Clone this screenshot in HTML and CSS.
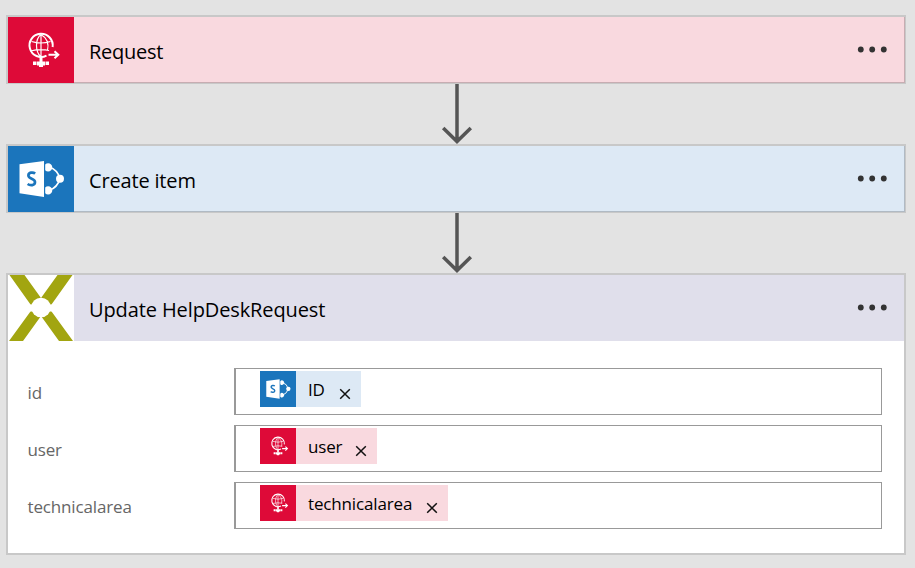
FILE: index.html
```html
<!DOCTYPE html>
<html lang="en">
<head>
<meta charset="utf-8">
<title>Workflow designer</title>
<link rel="stylesheet" href="styles.css">
</head>
<body>
<svg class="defs" width="0" height="0" aria-hidden="true">
  <symbol id="globe" viewBox="0 0 66 66">
    <g fill="none" stroke="#fff" stroke-width="2">
      <path d="M38.5 38.600A11.600 11.600 0 1 1 44.600 30"/>
      <path stroke-width="1.200" d="M23.500 24.500Q33 27.500 42.500 24.500M22.500 34Q33 31.500 41 33.500M33 17.500C27 22 27 35 33 40M33 17.500C39 21 41 27 39.500 33.500M33 17.500V40"/>
      <path d="M40.500 37.800H50M46.500 34.300L50.300 37.800L46.500 41.300"/>
      <path stroke-width="3" d="M33 40V45"/>
    </g>
    <path fill="#fff" d="M25 44.500H28.500V48H25zM29 44.500H37V48.500H35V50H31V48.500H29zM37.500 44.500H41V48H37.500z"/>
  </symbol>
  <symbol id="sharepoint" viewBox="0 0 66 66">
    <path fill="#fff" d="M11.500 18.300L36 15V51L11.500 47.200z"/>
    <path fill="none" stroke="#1b75bc" stroke-width="2.700" d="M27.200 27.500C25 26 20.400 26.200 20.400 29.500C20.400 33.200 27 32.200 27 36C27 39.700 22.200 39.800 19.600 38"/>
    <path fill="none" stroke="#fff" stroke-width="1.700" d="M41 21Q49.500 23.500 52 32.700Q49.500 41.500 41 44.500"/>
    <path fill="#fff" d="M37.200 18.600A4.100 4.100 0 1 1 37.200 24.200zM37.200 41.600A4.100 4.100 0 1 1 37.200 47.200z"/>
    <circle cx="52" cy="32.700" r="4" fill="#fff"/>
  </symbol>
  <symbol id="cross" viewBox="0 0 66 66">
    <path fill="#fff" d="M0 0H66V66H0z"/>
    <path fill="#a2a510" d="M1.500 0H16.500L33 23L49.500 0H64.500L41 33L65 66H51L33 41L15 66H1L25 33z"/>
    <circle cx="33" cy="32.500" r="9.800" fill="#fff"/>
    <path fill="#fff" d="M22 29.500H44V36.500H22z"/>
  </symbol>
  <symbol id="dots" viewBox="0 0 30 8">
    <g fill="#333"><circle cx="3.800" cy="3.500" r="2.900"/><circle cx="15.200" cy="3.500" r="2.900"/><circle cx="26.800" cy="3.500" r="2.900"/></g>
  </symbol>
  <symbol id="arrow" viewBox="0 0 32 60">
    <path fill="none" stroke="#555" stroke-width="3.500" d="M16 0V57.500M2.200 44L16 57.500L29.800 44"/>
  </symbol>
  <symbol id="remove" viewBox="0 0 12 12">
    <path fill="none" stroke="#111" stroke-width="1.500" d="M1.200 1.200L10.800 10.800M10.800 1.200L1.200 10.800"/>
  </symbol>
</svg>
<main class="flow">
  <section class="card">
    <header class="head request">
      <svg class="logo red"><use href="#globe"/></svg>
      <h2 class="title t-request">Request</h2>
      <svg class="menu"><use href="#dots"/></svg>
    </header>
  </section>
  <svg class="arrow"><use href="#arrow"/></svg>
  <section class="card">
    <header class="head create">
      <svg class="logo blue"><use href="#sharepoint"/></svg>
      <h2 class="title t-create">Create item</h2>
      <svg class="menu"><use href="#dots"/></svg>
    </header>
  </section>
  <svg class="arrow"><use href="#arrow"/></svg>
  <section class="card open">
    <header class="head update">
      <svg class="logo"><use href="#cross"/></svg>
      <h2 class="title t-update">Update HelpDeskRequest</h2>
      <svg class="menu"><use href="#dots"/></svg>
    </header>
    <div class="fields">
      <div class="row">
        <span class="label">id</span>
        <div class="input"><div class="token create w-id"><svg class="chip blue"><use href="#sharepoint"/></svg><span class="name">ID</span><svg class="remove"><use href="#remove"/></svg></div></div>
      </div>
      <div class="row">
        <span class="label">user</span>
        <div class="input"><div class="token request w-user"><svg class="chip red"><use href="#globe"/></svg><span class="name">user</span><svg class="remove"><use href="#remove"/></svg></div></div>
      </div>
      <div class="row">
        <span class="label">technicalarea</span>
        <div class="input"><div class="token request w-area"><svg class="chip red"><use href="#globe"/></svg><span class="name">technicalarea</span><svg class="remove"><use href="#remove"/></svg></div></div>
      </div>
    </div>
  </section>
</main>
</body>
</html>
```
FILE: styles.css
```css
* { box-sizing: border-box; }
body {
  margin: 0;
  background: #e3e3e3;
  font-family: "Open Sans", "Noto Sans", sans-serif;
  color: #000;
  overflow: hidden;
}
svg { display: block; flex: none; }
.defs { position: absolute; }
.flow { display: flex; flex-direction: column; padding: 15px 9px 0 6px; }
.card {
  height: 69px;
  border: solid #c8c8c8;
  border-width: 2px 1px 1px 2px;
  background: #fff;
}
.open { height: 282px; border-width: 2px; }
.head { display: flex; align-items: center; height: 66px; box-shadow: inset -1px -1px rgba(0, 0, 0, .2); }
.open .head { box-shadow: none; }
.request { background: #f9d9df; }
.create { background: #dde9f5; }
.update { background: #e0dfeb; }
.red { background: #de0a38; }
.blue { background: #1b75bc; }
.logo { width: 66px; height: 66px; }
.title { margin: 4px 0 0 15px; font-size: 20px; line-height: 28px; font-weight: 400; white-space: nowrap; }
.t-request { letter-spacing: -.25px; }
.t-create { letter-spacing: -.17px; }
.t-update { letter-spacing: -.11px; }
.menu { width: 30px; height: 8px; margin: 0 18px 1px auto; }
.open .menu { margin-right: 17px; }
.arrow { width: 32px; height: 60px; margin-left: 435px; }
.fields { display: flex; flex-direction: column; gap: 10px; padding: 27px 22px 0 19.5px; }
.row { display: flex; height: 47px; }
.label { width: 206.5px; padding-top: 13px; font-size: 17px; line-height: 24px; letter-spacing: -.15px; color: #666; }
.input { flex: 1; border: 1px solid #999; border-left-width: 2px; padding: 2px 0 0 24px; }
.token { display: flex; height: 36px; }
.w-id { width: 101px; }
.w-user { width: 117px; }
.w-area { width: 188px; }
.chip { width: 36px; height: 36px; }
.name { margin-left: 12px; font-size: 17px; line-height: 38px; letter-spacing: -.15px; white-space: nowrap; }
.remove { width: 12px; height: 12px; margin: 16.5px 9.700px 0 auto; }
```
